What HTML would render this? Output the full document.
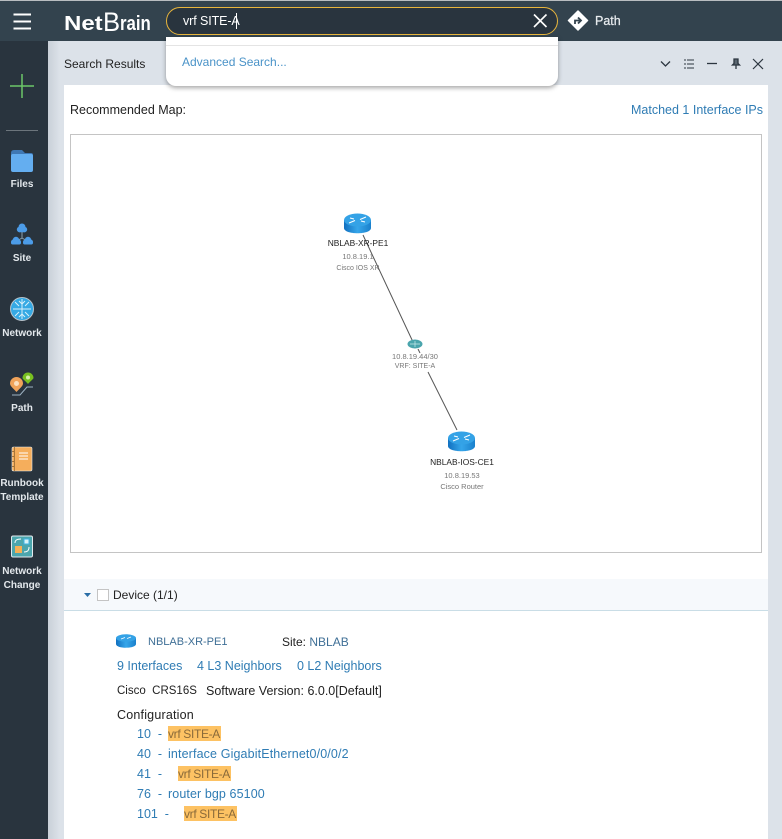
<!DOCTYPE html>
<html><head><meta charset="utf-8">
<style>
html,body{margin:0;padding:0}
body{width:782px;height:839px;position:relative;overflow:hidden;background:#dce2e9;font-family:"Liberation Sans",sans-serif;font-size:12.5px;color:#222}
.a{position:absolute;white-space:nowrap}
.l{color:#2f7cb4}
.n{font-size:10px;font-weight:bold;text-align:center;left:0;width:44px;line-height:14px;color:#e3e8ec;white-space:nowrap}
.m{font-size:7.5px;color:#777;text-align:center;line-height:10px}
.h{background:#fdc263;color:#8a6a3a;font-size:12px;letter-spacing:-.34px;padding:0 1px 0 0;height:15px}
.d{font-size:8.4px;line-height:12px;text-align:center;color:#222;width:120px}
</style></head><body>
<div class="a" style="left:0;top:0;width:782px;height:41px;background:#33434e;border-top:1px solid #b9bdc0;box-sizing:border-box"></div>
<div class="a" style="left:0;top:41px;width:48px;height:798px;background:#29343e"></div>
<div class="a" style="left:48px;top:41px;width:12px;height:798px;background:linear-gradient(90deg,#c9d0d8,#dce2e9)"></div>
<div class="a" style="left:64px;top:85px;width:704px;height:754px;background:#fff"></div>

<!-- header -->
<svg class="a" style="left:0;top:0" width="782" height="41">
<path d="M13.500 14.500H31M13.500 21.500H31M13.500 28.500H31" stroke="#fff" stroke-width="2" fill="none"/>
</svg>
<div class="a" style="left:64px;top:12px;font-size:20px;line-height:24px;font-weight:bold;color:#fff;transform-origin:0 0;transform:scaleX(1.2)">Net</div>
<div class="a" style="left:103px;top:7px;font-size:27px;line-height:30px;color:#fff;transform-origin:0 0;transform:scaleX(.95)">B</div>
<div class="a" style="left:120px;top:12px;font-size:20px;line-height:24px;font-weight:bold;color:#fff;transform-origin:0 0;transform:scaleX(.84)">rain</div>
<div class="a" style="left:166px;top:7px;width:392px;height:28px;box-sizing:border-box;border:1.500px solid #e8b53c;border-radius:14px;background:#29343e"></div>
<div class="a" style="left:183px;top:13px;color:#fff;font-size:12.500px;line-height:16px;letter-spacing:-.1px">vrf SITE-A</div>
<div class="a" style="left:236px;top:13px;width:1px;height:16px;background:#fff"></div>
<svg class="a" style="left:530px;top:11px" width="20" height="20"><path d="M4 3.500L16.500 16M16.500 3.500L4 16" stroke="#fff" stroke-width="1.600" fill="none"/></svg>
<svg class="a" style="left:567px;top:10px" width="22" height="22"><path d="M11 1L20.500 10.500 11 20 1.500 10.500Z" fill="#fff" stroke="#fff" stroke-linejoin="round" stroke-width="1.500"/><path d="M8 14V10.500H13M11 7.500L14 10.500 11 13.500" stroke="#33434e" stroke-width="1.800" fill="none"/></svg>
<div class="a" style="left:595px;top:13px;color:#e8ecef;font-size:12.500px;line-height:16px;-webkit-text-stroke:.25px #e8ecef">Path</div>

<!-- panel title -->
<div class="a" style="left:64px;top:56px;font-size:12px;line-height:16px;color:#222">Search Results</div>
<svg class="a" style="left:650px;top:50px" width="120" height="30">
<path d="M11 11.500L15.500 16 20 11.500" stroke="#2c3640" stroke-width="1.300" fill="none"/>
<path d="M37 10H44M37 14H44M37 18H44" stroke="#2c3640" stroke-width="1" fill="none"/><path d="M34 10H36M34 14H36M34 18H36" stroke="#2c3640" fill="none"/>
<path d="M57 13.500H67" stroke="#2c3640" stroke-width="1.300"/>
<path d="M84 9H88V13.500L89.500 15H82.500L84 13.500ZM86 15V19" stroke="#2c3640" stroke-width="1.300" fill="#5a6670"/>
<path d="M103 9L113 19M113 9L103 19" stroke="#2c3640" stroke-width="1.200"/>
</svg>

<!-- dropdown -->
<div class="a" style="left:166px;top:37px;width:392px;height:49px;background:#fff;border-radius:0 0 10px 10px;box-shadow:0 2px 5px rgba(0,0,0,.35)"></div>
<div class="a" style="left:166px;top:45px;width:392px;height:1px;background:#e4e4e4"></div>
<div class="a l" style="left:182px;top:55px;font-size:12px;line-height:15px;color:#4a93c8">Advanced Search...</div>

<div class="a" style="left:70px;top:102px;font-size:12.500px;line-height:16px">Recommended Map:</div>
<div class="a l" style="left:631px;top:102px;font-size:12.500px;line-height:16px">Matched 1 Interface IPs</div>

<!-- map -->
<div class="a" style="left:70px;top:134px;width:692px;height:419px;box-sizing:border-box;border:1px solid #c4c4c4;background:#fff"></div>
<svg class="a" style="left:70px;top:134px" width="692" height="419">
<defs><linearGradient id="g" x1="0" x2="1" y1="0" y2="0"><stop offset="0" stop-color="#1170c0"/><stop offset=".5" stop-color="#36a6ea"/><stop offset="1" stop-color="#1a80cc"/></linearGradient></defs>
<path d="M293 101L343 208M348 215L350 219" stroke="#555" stroke-width="1" fill="none"/>
<path d="M358 238L387 296" stroke="#555" stroke-width="1" fill="none"/>
<g transform="translate(0,1)"><path d="M274 85V93C274 100 301 100 301 93V85Z" fill="url(#g)"/><ellipse cx="287.500" cy="85" rx="13.500" ry="6.500" fill="#34a2e6"/><path d="M279 88L285 85.500M296 82L290 84.500M280 83L284 84M295 87L291 86" stroke="#fff" stroke-width="1" fill="none"/></g>
<g transform="translate(0,1)"><path d="M378 303V311C378 318 405 318 405 311V303Z" fill="url(#g)"/><ellipse cx="391.500" cy="303" rx="13.500" ry="6.500" fill="#34a2e6"/><path d="M383 306L389 303.500M400 300L394 302.500M384 301L388 302M399 305L395 304" stroke="#fff" stroke-width="1" fill="none"/></g>
<ellipse cx="345" cy="210" rx="7.500" ry="4.500" fill="#4aa5ad"/><path d="M340 210H350M345 207V213" stroke="#c8eaec" stroke-width=".7"/>
</svg>
<div class="a d" style="left:298px;top:237px">NBLAB-XR-PE1</div>
<div class="a m" style="left:298px;top:252px;width:120px">10.8.19.1</div>
<div class="a m" style="left:298px;top:264px;width:120px;font-size:7px">Cisco IOS XR</div>
<div class="a m" style="left:355px;top:352px;width:120px">10.8.19.44/30</div>
<div class="a m" style="left:355px;top:362px;width:120px;font-size:7px">VRF: SITE-A</div>
<div class="a d" style="left:402px;top:456px">NBLAB-IOS-CE1</div>
<div class="a m" style="left:402px;top:471px;width:120px">10.8.19.53</div>
<div class="a m" style="left:402px;top:482px;width:120px">Cisco Router</div>

<!-- device header -->
<div class="a" style="left:64px;top:579px;width:704px;height:32px;box-sizing:border-box;background:#f6f9fc;border-bottom:1px solid #c9dde6"></div>
<svg class="a" style="left:83px;top:591px" width="10" height="8"><path d="M1 2H8L4.500 6Z" fill="#2a6ea6"/></svg>
<div class="a" style="left:97px;top:589px;width:12px;height:12px;box-sizing:border-box;border:1px solid #c4c4c4;background:#fff"></div>
<div class="a" style="left:113px;top:587px;font-size:12px;line-height:16px">Device (1/1)</div>

<svg class="a" style="left:116px;top:634px" width="20" height="16"><path d="M0 4V10C0 15 20 15 20 10V4Z" fill="url(#g)"/><ellipse cx="10" cy="4" rx="10" ry="3.800" fill="#34a2e6"/><path d="M5 5L9 3.500M15 3L11 4.500" stroke="#fff" stroke-width=".8"/></svg>
<div class="a" style="left:148px;top:634px;line-height:16px;color:#3f6f96;font-size:11px">NBLAB-XR-PE1</div>
<div class="a" style="left:282px;top:634px;line-height:16px;font-size:12px">Site: <span style="color:#3f6f96">NBLAB</span></div>
<div class="a l" style="left:117px;top:658px;line-height:16px">9 Interfaces</div>
<div class="a l" style="left:197px;top:658px;line-height:16px">4 L3 Neighbors</div>
<div class="a l" style="left:297px;top:658px;line-height:16px">0 L2 Neighbors</div>
<div class="a" style="left:117px;top:683px;line-height:16px;font-size:11.500px">Cisco&nbsp; CRS16S</div>
<div class="a" style="left:206px;top:683px;line-height:16px">Software Version: 6.0.0[Default]</div>
<div class="a" style="left:117px;top:707px;line-height:16px;letter-spacing:.2px">Configuration</div>

<div class="a l" style="left:137px;top:726px;line-height:16px">10&nbsp; -</div>
<div class="a h" style="left:168px;top:726px;line-height:16px">vrf SITE-A</div>
<div class="a l" style="left:137px;top:746px;line-height:16px">40&nbsp; -</div>
<div class="a l" style="left:168px;top:746px;line-height:16px;letter-spacing:.13px">interface GigabitEthernet0/0/0/2</div>
<div class="a l" style="left:137px;top:766px;line-height:16px">41&nbsp; -</div>
<div class="a h" style="left:178px;top:766px;line-height:16px">vrf SITE-A</div>
<div class="a l" style="left:137px;top:786px;line-height:16px">76&nbsp; -</div>
<div class="a l" style="left:168px;top:786px;line-height:16px;letter-spacing:.1px">router bgp 65100</div>
<div class="a l" style="left:137px;top:806px;line-height:16px">101&nbsp; -</div>
<div class="a h" style="left:184px;top:806px;line-height:16px">vrf SITE-A</div>

<!-- sidebar -->
<svg class="a" style="left:0;top:41px" width="48" height="560">
<path d="M22 33V57M10 45H34" stroke="#6cc768" stroke-width="1.500"/>
<path d="M6 89.500H38" stroke="#6c757c" stroke-width="1"/>
<!-- files -->
<path d="M11 112Q11 109 14 109H22L25 112H31Q33 112 33 114V118H11Z" fill="#3f78b4"/>
<rect x="11" y="113" width="22" height="18" rx="2" fill="#64aef0"/>
<!-- site -->
<path d="M22 190V197L15 201M22 197L29 201" stroke="#8aa0b0" stroke-width="1" fill="none"/>
<g fill="#4c9ce8">
<circle cx="19.500" cy="188.500" r="2.700"/><circle cx="22" cy="186" r="3.500"/><circle cx="24.500" cy="188.500" r="2.700"/><rect x="18" y="188" width="8" height="3.200" rx="1.500"/>
<circle cx="13.500" cy="201" r="2.500"/><circle cx="16" cy="199" r="3.200"/><circle cx="18.500" cy="201" r="2.500"/><rect x="11" y="200" width="10" height="3.500" rx="1.700"/>
<circle cx="25.500" cy="201" r="2.500"/><circle cx="28" cy="199" r="3.200"/><circle cx="30.500" cy="201" r="2.500"/><rect x="23" y="200" width="10" height="3.500" rx="1.700"/>
</g>
<!-- network -->
<circle cx="22" cy="268" r="11.500" fill="#35a9e4" stroke="#b8c4cc" stroke-width="1"/>
<path d="M22 258V278M13 268H31M15 261L19 265M29 261L25 265M15 275L19 271M29 275L25 271M19 260L22 263 25 260M19 276L22 273 25 276" stroke="#d8f0fa" stroke-width="1" fill="none"/>
<!-- path -->
<path d="M12 354H20L27 346H33" stroke="#9db2c2" stroke-width="1" fill="none"/>
<path d="M16.500 351C13 347 10 345 10 342.500A6.500 6.500 0 0 1 23 342.500C23 345 20 347 16.500 351Z" fill="#f0a35a"/>
<path d="M28 343C25 339.500 22.500 338 22.500 337A5.500 5.500 0 0 1 33.500 337C33.500 338 31 339.500 28 343Z" fill="#78c020"/>
<circle cx="28" cy="336.500" r="2" fill="#d7f0a8"/><circle cx="16.500" cy="342.500" r="2.500" fill="#fbe0c0"/>
<!-- runbook -->
<rect x="12" y="406" width="20" height="24" rx="1.500" fill="#f5ae5c" stroke="#e6ecef" stroke-width=".6"/>
<path d="M14.500 406V430" stroke="#a8773c" stroke-width="1"/>
<path d="M19 412H28M19 415H28M19 418H28" stroke="#fff" stroke-width="1"/>
<path d="M13 410V411M13 415V416M13 420V421M13 425V426" stroke="#8a5a20" stroke-width="1.500"/>
<!-- network change -->
<rect x="11.500" y="495" width="21" height="21" rx="1.500" fill="#4ca6ad" stroke="#e3eaee" stroke-width="1"/>
<rect x="15" y="505" width="7" height="7" fill="#f5b056"/>
<rect x="24" y="498" width="5" height="5" fill="#d8f2f6" stroke="#3fb4e6"/>
<path d="M15 502C15 499 17 498 21 498M29 506C29 510 27 511 24 511" stroke="#fff" stroke-width="1" fill="none"/>
</svg>
<div class="a n" style="top:178px">Files</div>
<div class="a n" style="top:252px">Site</div>
<div class="a n" style="top:327px">Network</div>
<div class="a n" style="top:402px">Path</div>
<div class="a n" style="top:477px">Runbook<br>Template</div>
<div class="a n" style="top:565px">Network<br>Change</div>
</body></html>
